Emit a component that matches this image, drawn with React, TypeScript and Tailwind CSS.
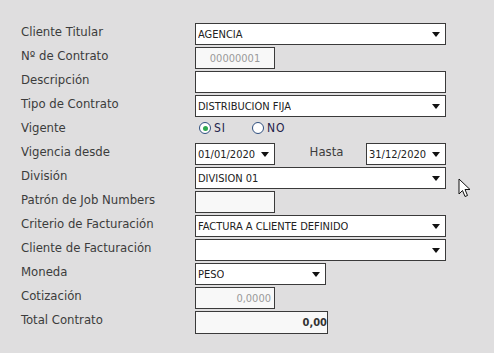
import React from 'react';

const font = { fontFamily: '"DejaVu Sans Condensed", "DejaVu Sans", Tahoma, sans-serif' };

const Arrow: React.FC = () => (
  <span className="absolute right-[3px] top-1/2 -translate-y-1/2 w-[12px] h-[14px] flex items-center justify-center">
    <svg width="8" height="5" viewBox="0 0 8 5"><path d="M0 0 H8 L4 5 Z" fill="#111" /></svg>
  </span>
);

const Select: React.FC<{ value: string; width: string }> = ({ value, width }) => (
  <div className={`relative h-[22px] ${width} bg-white border border-[#3a3a3a] text-[11px] text-[#222] flex items-center pl-[2px] pr-[16px] leading-none`}>
    <span className="truncate">{value}</span>
    <Arrow />
  </div>
);

const Input: React.FC<{ value?: string; width: string; disabled?: boolean; align?: 'left' | 'center' | 'right'; bold?: boolean; h?: string }> = ({ value = '', width, disabled, align = 'left', bold, h = 'h-[22px]' }) => {
  const justify = align === 'right' ? 'justify-end' : align === 'center' ? 'justify-center' : 'justify-start';
  return (
    <div
      className={`${h} ${width} border border-[#3a3a3a] text-[11px] flex items-center leading-none ${justify} ${disabled ? 'bg-[#f8f8f8]' : 'bg-white'} ${bold ? 'font-bold text-[#333] pl-[3px] pr-0' : disabled ? 'text-[#9a9a9a] px-[3px]' : 'text-[#222] px-[3px]'}`}
    >
      {value}
    </div>
  );
};

const Row: React.FC<{ label: string; children: React.ReactNode }> = ({ label, children }) => (
  <div className="flex items-center h-[24px]">
    <div className="w-[174px] text-[13px] text-[#3c3c3c] -mt-[5px]">{label}</div>
    <div className="flex items-center">{children}</div>
  </div>
);

const Radio: React.FC<{ checked?: boolean; label: string }> = ({ checked, label }) => (
  <label className="flex items-center gap-[3px] text-[12px] text-[#22224a]">
    <span className="w-[12px] h-[12px] rounded-full border border-[#2f4f7f] bg-white flex items-center justify-center">
      {checked && <span className="w-[5px] h-[5px] rounded-full bg-[#2fa84f]" />}
    </span>
    <span className="tracking-[1px]">{label}</span>
  </label>
);

const App: React.FC = () => {
  return (
    <div className="w-[494px] h-[353px] bg-[#dfdedf] relative overflow-hidden" style={font}>
      <div className="pt-[22px] pl-[21px] flex flex-col">
        <Row label="Cliente Titular"><Select value="AGENCIA" width="w-[251px]" /></Row>
        <Row label="Nº de Contrato"><Input value="00000001" width="w-[80px]" disabled align="center" /></Row>
        <Row label="Descripción"><Input width="w-[251px]" /></Row>
        <Row label="Tipo de Contrato"><Select value="DISTRIBUCIÓN FIJA" width="w-[251px]" /></Row>
        <Row label="Vigente">
          <div className="flex items-center gap-[26px] pl-[4px] -mt-[4px]">
            <Radio checked label="SI" />
            <Radio label="NO" />
          </div>
        </Row>
        <Row label="Vigencia desde">
          <div className="flex items-center w-[251px] justify-between">
            <Select value="01/01/2020" width="w-[80px]" />
            <span className="text-[13px] text-[#3c3c3c] -mt-[5px] ml-[12px]">Hasta</span>
            <Select value="31/12/2020" width="w-[80px]" />
          </div>
        </Row>
        <Row label="División"><Select value="DIVISION 01" width="w-[251px]" /></Row>
        <Row label="Patrón de Job Numbers"><Input width="w-[80px]" disabled /></Row>
        <Row label="Criterio de Facturación"><Select value="FACTURA A CLIENTE DEFINIDO" width="w-[251px]" /></Row>
        <Row label="Cliente de Facturación"><Select value="" width="w-[251px]" /></Row>
        <Row label="Moneda"><Select value="PESO" width="w-[131px]" /></Row>
        <Row label="Cotización"><Input value="0,0000" width="w-[80px]" disabled align="right" /></Row>
        <Row label="Total Contrato"><Input value="0,00" width="w-[133px]" disabled align="right" bold h="h-[23px]" /></Row>
      </div>
      <svg className="absolute left-[458px] top-[178px]" width="13" height="20" viewBox="0 0 13 20">
        <path d="M1 1 V16 L4.5 12.5 L7 18.5 L9.5 17.5 L7 11.5 H12 Z" fill="#fff" stroke="#111" strokeWidth="1" strokeLinejoin="miter" />
      </svg>
    </div>
  );
};

export default App;
